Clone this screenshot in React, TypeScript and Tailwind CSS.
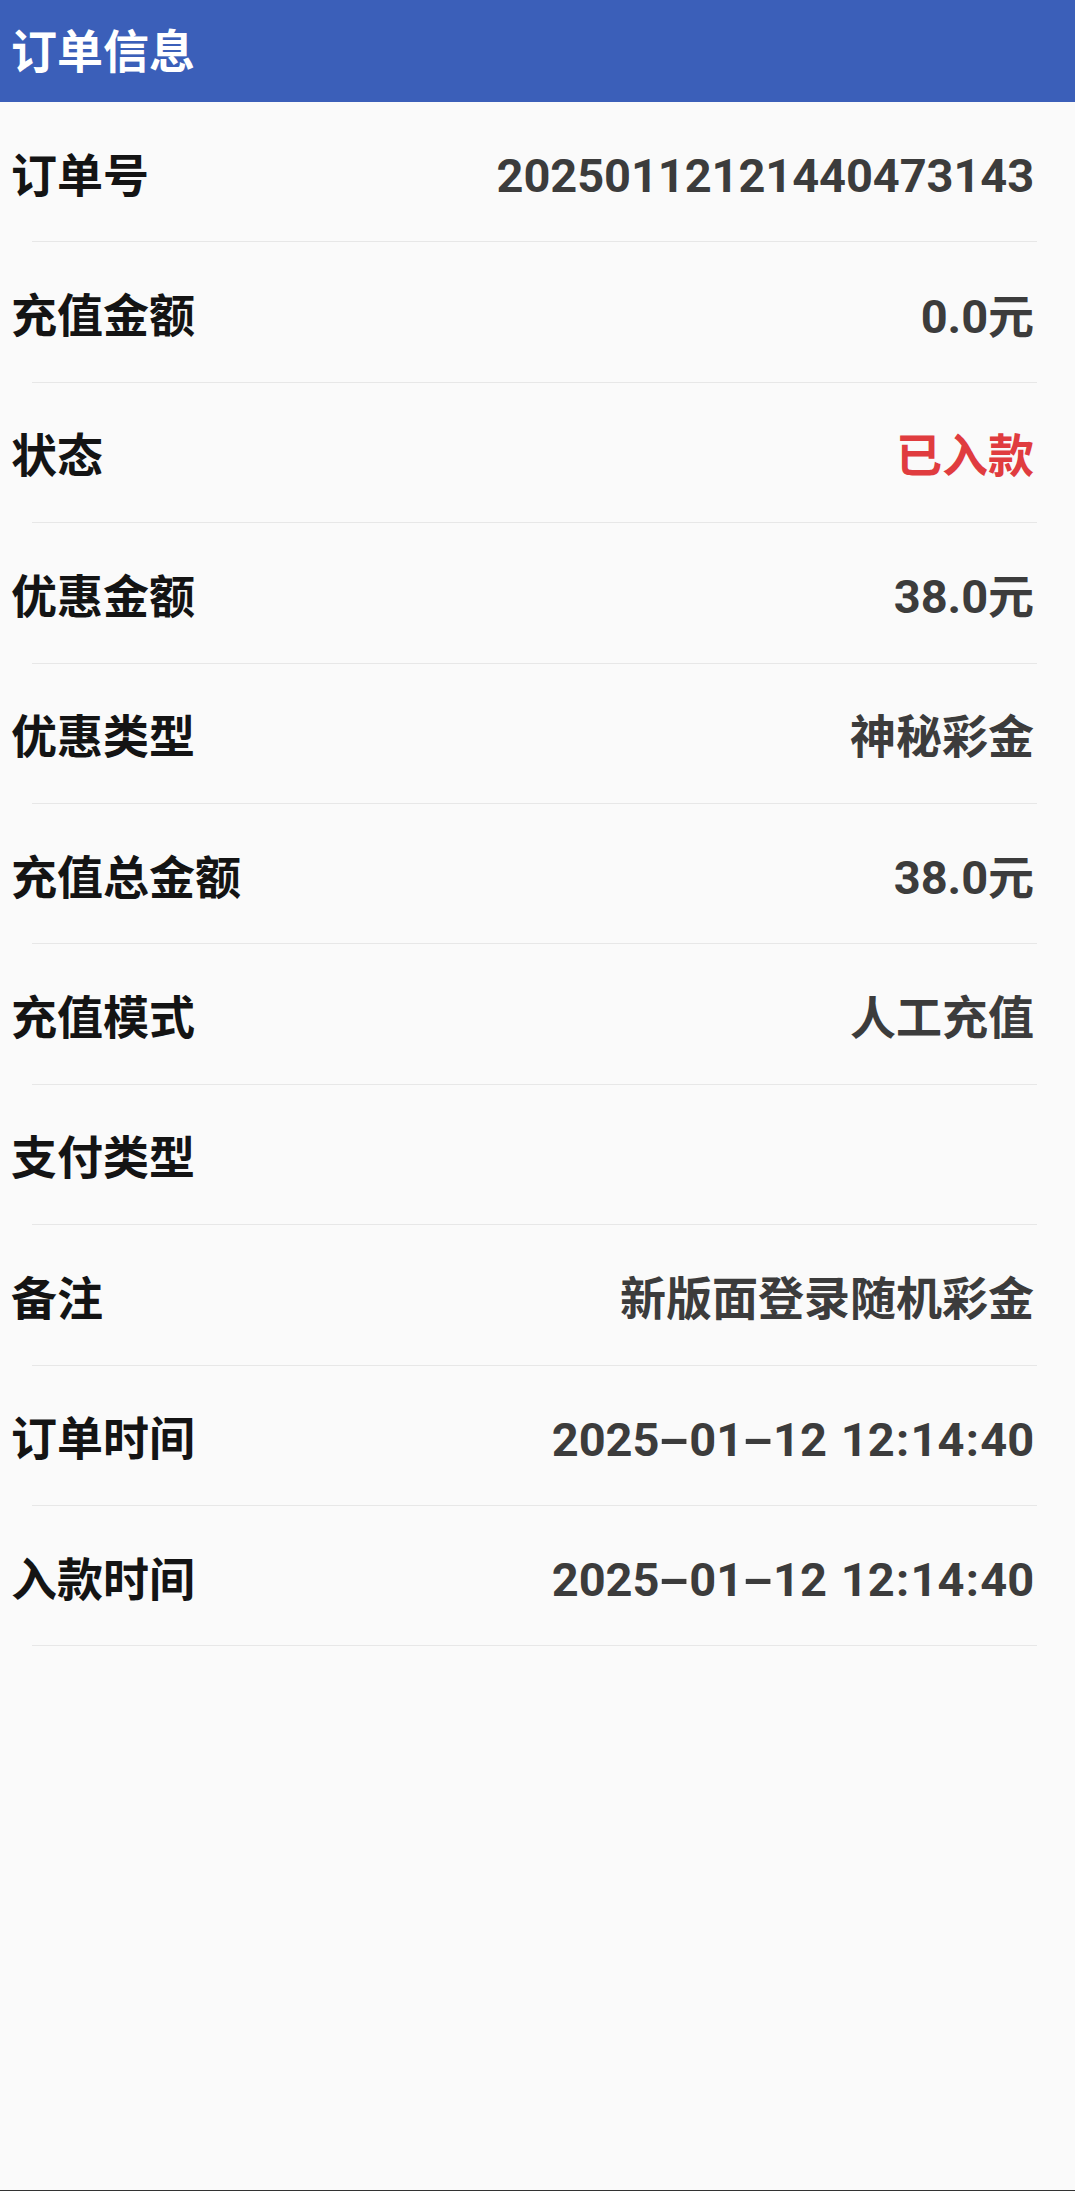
import React from 'react'

type Row = {
  label: string
  value: string
  tone?: 'red'
}

const rows: Row[] = [
  { label: '订单号', value: '20250112121440473143' },
  { label: '充值金额', value: '0.0元' },
  { label: '状态', value: '已入款', tone: 'red' },
  { label: '优惠金额', value: '38.0元' },
  { label: '优惠类型', value: '神秘彩金' },
  { label: '充值总金额', value: '38.0元' },
  { label: '充值模式', value: '人工充值' },
  { label: '支付类型', value: '' },
  { label: '备注', value: '新版面登录随机彩金' },
  { label: '订单时间', value: '2025-01-12 12:14:40' },
  { label: '入款时间', value: '2025-01-12 12:14:40' },
]

function ValueText({ text }: { text: string }) {
  const parts = text.match(/[\x20-\x7e]+|[^\x20-\x7e]+/g) ?? []
  return (
    <>
      {parts.map((part, i) =>
        /^[\x20-\x7e]+$/.test(part) ? (
          <span key={i} className="text-[47px] tracking-[-0.1px]">
            {part.split('').map((ch, j) => {
              if (ch === '-') {
                return (
                  <span key={j} className="inline-block w-[30px] text-center">
                    <span className="inline-block scale-x-190">-</span>
                  </span>
                )
              }
              if (ch === ':') {
                return (
                  <span key={j} className="inline-block w-[16px] text-center">
                    :
                  </span>
                )
              }
              if (ch === ' ') {
                return <span key={j} className="inline-block w-[14px]" />
              }
              return <React.Fragment key={j}>{ch}</React.Fragment>
            })}
          </span>
        ) : (
          <span key={i}>{part}</span>
        ),
      )}
    </>
  )
}

export default function App() {
  return (
    <div className="flex h-[2191px] flex-col bg-[#fafafa] font-['Roboto','Noto_Sans_CJK_SC',sans-serif]">
      <div className="flex h-[102px] shrink-0 items-center bg-[#3b5fb9] pl-[11px] pt-[2px]">
        <h1 className="text-[46px] font-bold leading-none text-white">订单信息</h1>
      </div>

      <div className="flex flex-col">
        {rows.map((row) => (
          <div key={row.label} className="flex flex-col">
            <div className="flex h-[139.4px] items-center justify-between pl-[11px] pr-[41px] pt-[8px]">
              <span className="text-[46px] font-bold leading-none text-[#141414]">{row.label}</span>
              <span
                className={
                  row.tone === 'red'
                    ? 'text-[46px] font-bold leading-none text-[#e03c3f]'
                    : 'text-[46px] font-bold leading-none text-[#3c3c3c]'
                }
              >
                <ValueText text={row.value} />
              </span>
            </div>
            <div className="ml-[32px] mr-[38px] h-px bg-[#e7e7e7]" />
          </div>
        ))}
      </div>

      <div className="flex-1" />
      <div className="h-px bg-[#333333]" />
    </div>
  )
}
